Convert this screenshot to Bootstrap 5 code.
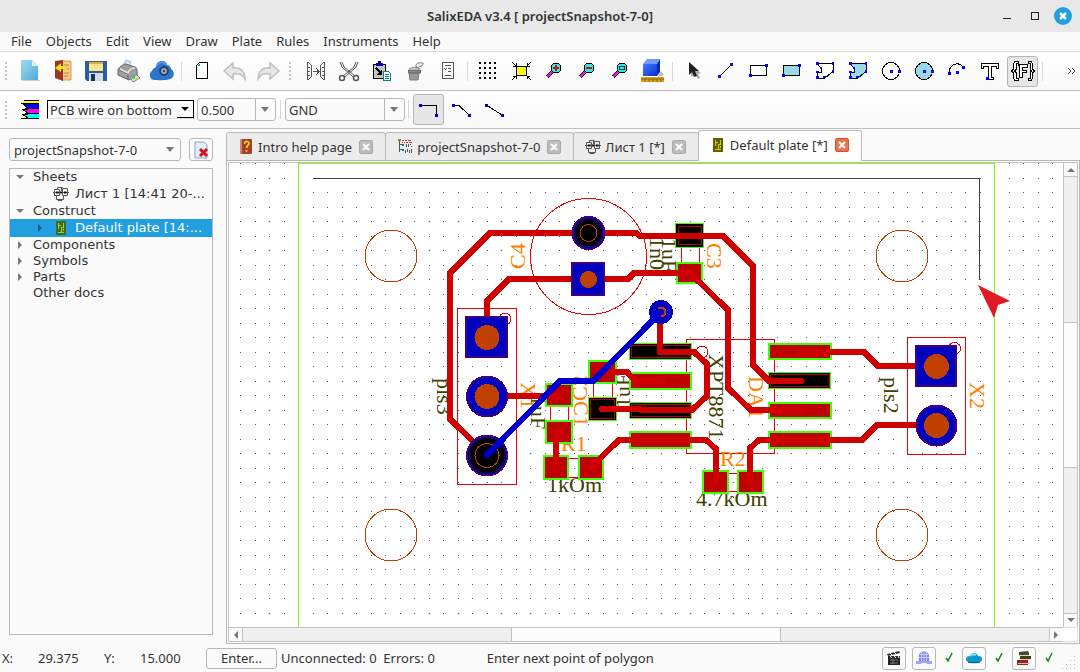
<!DOCTYPE html>
<html lang="en">
<head>
<meta charset="utf-8">
<meta name="viewport" content="width=device-width, initial-scale=1">
<title>SalixEDA v3.4</title>
<link href="https://cdn.jsdelivr.net/npm/bootstrap@5.3.0/dist/css/bootstrap.min.css" rel="stylesheet">
<style>
  body { font: 13px/16px "Noto Sans", "Liberation Sans", sans-serif; color: #333; background: #fafafa; }
  button, select { font: inherit; color: inherit; }
  .title-bar { height: 32px; background: #e8e8e8; font-weight: 600; }
  .title-text { font: 600 13px/32px "Noto Sans", sans-serif; color: #333; }
  .win-btns { padding-right: 3px; }
  .win-btn { border: 0; background: none; padding: 0; width: 28px; height: 32px; }
  .menu-bar { height: 20px; padding: 0 0 2px 11px; gap: 14px; border-bottom: 1px solid #dcdcdc; background: #fafafa; }
  .menu-bar a { color: #333; text-decoration: none; white-space: nowrap; }
  .tool-bar { border-bottom: 1px solid #bdbdbd; background: linear-gradient(#fff, #f8f8f8); }
  .bar-one { height: 39px; }
  .bar-two { height: 38px; }
  .grip { width: 13px; height: 20px; flex: none; background: radial-gradient(circle, #c4c4c4 1px, transparent 1px) 4px 0 / 4px 4px no-repeat; background-repeat: repeat-y; }
  .grip-mid { width: 15px; }
  .tool { width: 33px; height: 31px; flex: none; padding: 0; border: 0; background: none; display: flex; align-items: center; justify-content: center; }
  .tool.on { width: 31px; margin: 0 1px; background: #e6e6e6; border: 1px solid #b4b4b4; border-radius: 3px; }
  .rule { width: 1px; height: 19px; margin: 0 3px; background: #d8d8d8; flex: none; }
  .combo { appearance: none; height: 23px; padding: 0 3px; border: 1px solid #b8b8b8; border-radius: 3px; background: #fbfbfb url("data:image/svg+xml,%3Csvg xmlns='http://www.w3.org/2000/svg' width='20' height='21'%3E%3Cpath d='M.5 0v21' stroke='%23b8b8b8'/%3E%3Cpath d='M6 8h8l-4 5z' fill='%23777'/%3E%3C/svg%3E") right center no-repeat; }
  .combo-plain { padding: 0 4px; background: #fbfbfb url("data:image/svg+xml,%3Csvg xmlns='http://www.w3.org/2000/svg' width='20' height='21'%3E%3Cpath d='M6 8h8l-4 5z' fill='%23777'/%3E%3C/svg%3E") right center no-repeat; }
  .combo-layer { height: 19px; width: 147px; border: 1px solid #000; border-bottom-color: #ddd; border-radius: 0; padding: 0 2px; margin: 0 3px 0 1px; background: #fafafa url("data:image/svg+xml,%3Csvg xmlns='http://www.w3.org/2000/svg' width='16' height='17'%3E%3Cpath d='M0 16.500h16' stroke='%23000'/%3E%3Cpath d='M4 6h8l-4 4z' fill='%23000'/%3E%3C/svg%3E") right center no-repeat; }
  .side { width: 226px; flex: none; padding: 9px 13px; }
  .square-btn { width: 24px; height: 23px; padding: 0; border: 1px solid #b8b8b8; border-radius: 3px; background: #fbfbfb; display: flex; align-items: center; justify-content: center; flex: none; }
  .side { padding-left: 9px; }
  .tree { border: 1px solid #b8b8b8; margin-top: 7px; background: #fafafa; font: 13px/16px "DejaVu Sans", sans-serif; }
  .tree li { display: flex; align-items: center; height: 16px; padding-left: 5px; white-space: nowrap; }
  .tree li svg { flex: none; }
  .twist { width: 10px; height: 10px; margin-right: 8px; }
  .tree li.leaf { height: 18px; padding-left: 25px; }
  .leaf .pic { margin-right: 6px; }
  .leaf .no-twist { margin-left: 18px; }
  .tree li.picked { background: #219fde; color: #fff; }
  .tab-strip { height: 31px; margin-top: 1px; }
  .doc-tab { height: 29px; margin-left: -1px; padding: 0 12px 0 11px; background: #ececec; border: 1px solid #b8b8b8; border-radius: 3px 3px 0 0; display: flex; align-items: center; white-space: nowrap; }
  .doc-tab:first-child { margin-left: 0; }
  .doc-tab.current { height: 31px; background: #fff; border-bottom: 0; padding-bottom: 2px; position: relative; z-index: 1; }
  .doc-tab .x { border: 1px solid #a8a8a8; border-radius: 2px; background: #bdbdbd; width: 14px; height: 14px; padding: 0; display: flex; align-items: center; justify-content: center; margin-left: 7px; }
  .doc-tab.current .x { background: #e8734f; border-color: #dd4b2c; }
  .pane { border: 1px solid #b8b8b8; margin-top: -1px; padding: 1px; background: #fff; }
  .board { display: grid; grid-template: minmax(0, 1fr) 15px / minmax(0, 1fr) 15px; border: 1px solid #c2c2c2; border-width: 1px 0 0 1px; }
  .board > svg { width: 100%; height: 100%; display: block; overflow: hidden; }
  .bar-v { display: flex; flex-direction: column; border: 1px solid #c2c2c2; border-width: 0 1px; }
  .bar-h { display: flex; border: 1px solid #c2c2c2; border-width: 1px 0; }
  .arrow { flex: 0 0 13px; background: #fafafa; display: flex; align-items: center; justify-content: center; }
  .trough { flex: 1; background: #f0f0f0; }
  .slider { flex: 1; background: #fcfcfc; border: 1px solid #c2c2c2; }
  .bar-v .slider { border-width: 1px 0; } .bar-h .slider { border-width: 0 1px; }
  .bar-v .trough:nth-child(2) { border-top: 1px solid #c2c2c2; } .bar-v .trough:nth-child(4) { border-bottom: 1px solid #c2c2c2; }
  .bar-h .trough:nth-child(2) { border-left: 1px solid #c2c2c2; } .bar-h .trough:nth-child(4) { border-right: 1px solid #c2c2c2; }
  .status { height: 28px; }
  .status > * { flex: none; }
  .status-x { width: 36px; margin-left: 2px; }
  .status-y { width: 36px; }
  .status-num { width: 66px; }
  .status-icons { padding-right: 2px; }
  .gap-btn { margin-left: 6px; }
  .enter { width: 71px; height: 21px; padding: 0; border: 1px solid #b8b8b8; border-radius: 3px; background: #fbfbfb; }
  .tick { width: 26px; display: flex; justify-content: center; align-items: center; }
  .px { shape-rendering: crispEdges; }
  .cad { font: 22px "Liberation Serif", serif; }
</style>
<script src="https://cdn.jsdelivr.net/npm/bootstrap@5.3.0/dist/js/bootstrap.bundle.min.js"></script>
</head>
<body class="d-flex flex-column vh-100 overflow-hidden">

<svg width="0" height="0" class="position-absolute" aria-hidden="true">
  <defs>
    <linearGradient id="sky" x2="1" y2="1"><stop stop-color="#9fdcf0"/><stop offset="1" stop-color="#4fa9d8"/></linearGradient>
    <linearGradient id="cube" x2="1" y2="1"><stop stop-color="#3f7bff"/><stop offset="1" stop-color="#0a2fd0"/></linearGradient>
    <g id="sheet" fill="none" stroke="#555"><path d="M1.500 3.500h5v6h-5zM9.500 2.500h5v7h-5zM0 6.500h16M3.500 9v4.500h7V9M5 13.500v1h4v-1M8.500 1v4M4.500 3v-1.500h5"/><path d="M3 6.500h2.500M7 6.500h2M11 6.500h2.500" stroke="#111" stroke-width="2"/></g>
    <g id="plate"><rect x="3" y="1" width="10" height="14" fill="#3f6b1c"/><path d="M5.500 3v6M5 5.500h3M10.500 3v4M8 7.500h3M5 12.500h6M8.500 8v4M10.500 9v2" stroke="#a5cf3c" fill="none"/></g>
  </defs>
</svg>

<header class="title-bar d-flex align-items-center position-relative flex-shrink-0">
  <div class="title-text flex-grow-1 text-center">SalixEDA v3.4 [ projectSnapshot-7-0]</div>
  <div class="win-btns position-absolute end-0 top-0 d-flex">
    <button class="win-btn" aria-label="Minimize"><svg width="20" height="20" class="px"><path d="M6 12.500h8" stroke="#222"/></svg></button>
    <button class="win-btn" aria-label="Maximize"><svg width="20" height="20" class="px"><path d="M6.500 6.500h7v7h-7z" stroke="#222" fill="none"/></svg></button>
    <button class="win-btn" aria-label="Close"><svg width="20" height="20"><circle cx="10" cy="10" r="9" fill="#219fde"/><path d="M7 7l6 6M13 7l-6 6" stroke="#fff" stroke-width="2.500"/></svg></button>
  </div>
</header>

<nav class="menu-bar d-flex align-items-center flex-shrink-0">
  <a href="#">File</a><a href="#">Objects</a><a href="#">Edit</a><a href="#">View</a><a href="#">Draw</a><a href="#">Plate</a><a href="#">Rules</a><a href="#">Instruments</a><a href="#">Help</a>
</nav>

<div class="tool-bar bar-one d-flex align-items-center flex-shrink-0">
  <span class="grip"></span>
  <button class="tool" aria-label="New"><svg width="24" height="24"><path d="M3 21h19v1H5z" fill="#ccc"/><path d="M3 1h11l6 6v14H3z" fill="url(#sky)"/><path d="M14 1l6 6h-6z" fill="#d9f2fa"/></svg></button>
  <button class="tool" aria-label="Open"><svg width="24" height="24"><path d="M10 2h10v19H10z" fill="#f3c98a" stroke="#d99a4a"/><path d="M13 6h5M13 10h5M13 14h5M13 17h4" stroke="#c7823a"/><path d="M4 2l8-1v21l-8-3z" fill="#9c3526"/><path d="M4 9l6-5v3c5 0 6 2 6 5-2-2-3-2-6-2v3z" fill="#ffe11a"/></svg></button>
  <button class="tool" aria-label="Save"><svg width="24" height="24"><path d="M1 2h22v20H3l-2-2z" fill="#2a5f9e"/><path d="M5 3h14v9H5z" fill="#ffe38a"/><path d="M5 3h14v2H5z" fill="#e7a648"/><path d="M5 14h14v8H5z" fill="#d7dde3"/><path d="M7 15h4v7H7z" fill="#17355e"/></svg></button>
  <button class="tool" aria-label="Print"><svg width="24" height="24"><path d="M6 7l3-6 5 2-3 6z" fill="#d8ecff" stroke="#8fb6dc"/><path d="M1 11c0-2 5-6 8-6l9 3c2 1 2 2 2 4v5l-8 4-11-5z" fill="#9f9f9f" stroke="#666"/><path d="M2 11l9 4v6" stroke="#666" fill="none"/><path d="M3 10l8 4c1-3 3-5 7-5" stroke="#e4e4e4" fill="none" stroke-width="1.500"/><path d="M13 18l7-2 3 3-7 4z" fill="#c8e8ff" stroke="#789"/><path d="M15 19l3-1" stroke="#2c2" stroke-width="2"/><path d="M18 21l3-2" stroke="#fb3" stroke-width="2"/></svg></button>
  <button class="tool" aria-label="Cloud"><svg width="26" height="24"><path d="M5 21a5 5 0 01-2-9c1-3 3-3 4-4 0-4 3-6 6-6s5 2 5 4c3 0 4 3 4 4 3 2 4 6 1 9-3 3-15 2-18 2z" fill="#2b74cf"/><path d="M7 8c2-5 8-6 10-2" stroke="#7ab4f0" fill="none"/><circle cx="15" cy="12" r="4" fill="#8fa9c4" stroke="#28405c" stroke-width="2"/><circle cx="15" cy="12" r="1" fill="#123"/></svg></button>
  <span class="rule"></span>
  <button class="tool" aria-label="New sheet"><svg width="24" height="24" class="px"><path d="M9.500 3.500h8v16h-11v-13z" fill="#fff" stroke="#000"/><path d="M7 7h3V4z" fill="#088"/></svg></button>
  <button class="tool" aria-label="Undo"><svg width="24" height="24"><path d="M1 11l9-8v5c8-1 12 4 12 11-3-5-6-6-12-5v5z" transform="translate(0 1)" fill="#e6e6e6" stroke="#c0c0c0" stroke-width="1.500"/></svg></button>
  <button class="tool" aria-label="Redo"><svg width="24" height="24"><path d="M23 11l-9-8v5C6 7 2 12 2 19c3-5 6-6 12-5v5z" transform="translate(0 1)" fill="#e6e6e6" stroke="#c0c0c0" stroke-width="1.500"/></svg></button>
  <span class="grip grip-mid"></span>
  <button class="tool" aria-label="Mirror"><svg width="24" height="24" class="px" fill="none" stroke="#555"><path d="M3.500 3v18M7.500 6v12M4 3.500h1M5 4.500h1M6 5.500h1M4 20.500h1M5 19.500h1M6 18.500h1M20.500 3v18M16.500 6v12M19 3.500h1M18 4.500h1M17 5.500h1M19 20.500h1M18 19.500h1M17 18.500h1M9 12.500h6M12 9l3 3.500-3 3.500M4 8h2M4 12h2M4 16h2M18 8h2M18 12h2M18 16h2"/></svg></button>
  <button class="tool" aria-label="Cut"><svg width="24" height="24" fill="none" stroke="#555"><path d="M3 3l2 5 11 10M5 3l2 5 11 9M21 3l-2 5L8 18M19 3l-2 5L6 17"/><circle cx="5" cy="19" r="2.500" stroke-width="1.500"/><circle cx="19" cy="19" r="2.500" stroke-width="1.500"/></svg></button>
  <button class="tool" aria-label="Paste"><svg width="24" height="24" class="px"><path d="M3.500 5.500h12v14h-12z" fill="#c4c4c4" stroke="#000"/><path d="M6 4h7v3H6z" fill="#00a"/><path d="M8 2h3v3H8z" fill="#008"/><path d="M6 9l5 5" stroke="#000" stroke-width="2"/><path d="M12 10v6H7z"/><path d="M13.500 12.500h5l2 2v7h-7z" fill="#fff" stroke="#088"/><path d="M15 15.500h4M15 17.500h4M15 19.500h4" stroke="#088"/></svg></button>
  <button class="tool" aria-label="Delete"><svg width="24" height="24"><path d="M6 14h10l-1 7H7z" fill="#999" stroke="#777"/><path d="M5.500 11h12v3h-12z" fill="#888" stroke="#666"/><path d="M6 10c2-2 9-2 11 0" fill="#ccc" stroke="#888"/><path d="M13 8c-1-3 3-5 5-4 3-1 3 2 0 3s-2 2-5 1" fill="#eee" stroke="#777"/></svg></button>
  <button class="tool" aria-label="Properties"><svg width="24" height="24" class="px" fill="none" stroke="#555"><path d="M6.500 3.500h11v16h-11zM9 6.500h6M12 9.500h3M12 12.500h3M9 16.500h6M8 9.500h1M9 10.500h1M10 9.500h1"/></svg></button>
  <span class="rule"></span>
  <button class="tool" aria-label="Grid"><svg width="24" height="24" class="px"><g stroke="#000" stroke-width="2" stroke-dasharray="2 3"><path d="M3 4h17M3 9h17M3 14h17M3 19h17"/></g></svg></button>
  <button class="tool" aria-label="Fit"><svg width="24" height="24" class="px"><path d="M7.500 7.500h10v9h-10z" fill="#ff0" stroke="#000"/><path d="M3 3l4 4M7 4v3H4M22 3l-4 4M18 4v3h3M3 21l4-4M7 20v-3H4M22 21l-4-4M18 20v-3h3" stroke="#000" fill="none"/></svg></button>
  <button class="tool" aria-label="Zoom in"><svg width="24" height="24" class="px"><path d="M5 18l6-6" stroke="#000" stroke-width="4"/><path d="M5 18l6-6" stroke="#f0f" stroke-width="2"/><circle cx="14" cy="9" r="5" fill="#2ee" stroke="#000"/><path d="M11 9h6M14 6v6" stroke="#e00" stroke-width="2"/></svg></button>
  <button class="tool" aria-label="Zoom out"><svg width="24" height="24" class="px"><path d="M5 18l6-6" stroke="#000" stroke-width="4"/><path d="M5 18l6-6" stroke="#f0f" stroke-width="2"/><circle cx="14" cy="9" r="5" fill="#2ee" stroke="#000"/><path d="M11 9h6" stroke="#e00" stroke-width="2"/></svg></button>
  <button class="tool" aria-label="Zoom area"><svg width="24" height="24" class="px"><path d="M5 18l6-6" stroke="#000" stroke-width="4"/><path d="M5 18l6-6" stroke="#f0f" stroke-width="2"/><circle cx="14" cy="9" r="5" fill="#2ee" stroke="#000"/><path d="M11.500 7.500h5v3h-5z" stroke="#033" fill="none"/></svg></button>
  <button class="tool" aria-label="3D view"><svg width="26" height="26"><path d="M18 19l6-2-3-4z" fill="#bbb"/><path d="M3 6l4-5h13l-3 5z" fill="#6f9cff"/><path d="M17 6l3-5v13l-3 4z" fill="#0a28a8"/><path d="M3 6h14v12H3z" fill="url(#cube)"/><path d="M1 19h23v5H1z" fill="#d9a21b"/><path d="M1 21h23M5 21v3M9 21v3M13 21v3M17 21v3M21 21v3" stroke="#8c640a"/></svg></button>
  <span class="rule"></span>
  <button class="tool" aria-label="Select"><svg width="24" height="24"><path d="M10 6v12l4-3 3 5 2-1-2-4 3-1z" fill="#aaa"/><path d="M8 3v13l3-3 2 5 3-1-2-5h4z" fill="#222"/></svg></button>
  <button class="tool" aria-label="Line"><svg width="24" height="24" class="px"><path d="M6 17L18 5" stroke="#000"/><path d="M4 16h3v3H4zM16 4h3v3h-3z" fill="#00f"/><path d="M5 17h1v1H5zM17 5h1v1h-1z" fill="#c06"/></svg></button>
  <button class="tool" aria-label="Rectangle"><svg width="24" height="24" class="px"><path d="M3.500 6.500h16v10h-16z" fill="#fff" stroke="#000"/><path d="M2 15h3v3H2zM18 5h3v3h-3z" fill="#00f"/></svg></button>
  <button class="tool" aria-label="Filled rectangle"><svg width="24" height="24" class="px"><path d="M3.500 6.500h16v10h-16z" fill="#9ad9ea" stroke="#000"/><path d="M2 15h3v3H2zM18 5h3v3h-3z" fill="#00f"/></svg></button>
  <button class="tool" aria-label="Polygon"><svg width="24" height="24" class="px"><path d="M4 4.500h16v8l-8 6.500H4v-6h4v-4z" fill="#fff" stroke="#000"/><path d="M3 3h3v3H3zM19 3h2v3h-2zM19 11h2v3h-2zM10 17h3v2h-3zM3 17h3v3H3zM3 12h3v2H3zM7 8h2v2H7z" fill="#00f"/></svg></button>
  <button class="tool" aria-label="Filled polygon"><svg width="24" height="24" class="px"><path d="M4 4.500h16v8l-8 6.500H4v-6h4v-4z" fill="#9ad9ea" stroke="#000"/><path d="M3 3h3v3H3zM19 3h2v3h-2zM19 11h2v3h-2zM10 17h3v2h-3zM3 17h3v3H3zM3 12h3v2H3zM7 8h2v2H7z" fill="#00f"/></svg></button>
  <button class="tool" aria-label="Circle"><svg width="24" height="24" class="px"><circle cx="12" cy="12" r="8.500" fill="#fff" stroke="#000"/><path d="M11 11h3v3h-3zM19 11h3v3h-3z" fill="#00f"/><path d="M12 12h1v1h-1zM20 12h1v1h-1z" fill="#c06"/></svg></button>
  <button class="tool" aria-label="Filled circle"><svg width="24" height="24" class="px"><circle cx="12" cy="12" r="8.500" fill="#9ad9ea" stroke="#000"/><path d="M11 11h3v3h-3zM19 11h3v3h-3z" fill="#00f"/><path d="M12 12h1v1h-1zM20 12h1v1h-1z" fill="#c06"/></svg></button>
  <button class="tool" aria-label="Arc"><svg width="24" height="24" class="px"><path d="M4 13C5 5 14 2 18 8" fill="none" stroke="#000"/><path d="M3 13h3v3H3zM17 7h3v3h-3zM11 12h3v3h-3z" fill="#00f"/></svg></button>
  <button class="tool" aria-label="Text"><svg width="24" height="24" class="px"><path d="M3.500 4.500h17v5h-2v-2h-5v11h2v2h-7v-2h2v-11h-5v2h-2z" fill="#fff" stroke="#000"/><path d="M8 18h3v3H8z" fill="#00f"/></svg></button>
  <button class="tool on" aria-label="Function text" aria-pressed="true"><svg width="26" height="24" class="px" fill="#fff" stroke="#000"><path d="M8 2.500H5L3.500 5v5L1.500 12l2 2v5L5 21.500h3v-2H6v-6L4.500 12 6 10.500V4.500h2zM18 2.500h3L22.500 5v5l2 2-2 2v5L21 21.500h-3v-2h2v-6l1.500-1.500L20 10.500V4.500h-2z"/><path d="M8.500 5.500h9v3h-5v3h4v2h-4v5h-3v-11z"/></svg></button>
  <span class="rule"></span>
  <button class="tool ms-auto justify-content-end pe-1" aria-label="More"><svg width="9" height="8" fill="none" stroke="#555"><path d="M1 1l3 3-3 3M5 1l3 3-3 3"/></svg></button>
</div>

<div class="tool-bar bar-two d-flex align-items-center flex-shrink-0">
  <span class="grip"></span>
  <button class="tool" aria-label="Layers"><svg width="18" height="19" class="px"><path d="M3 1h15v2H1z" fill="#ff0"/><path d="M1 4h17v4H6z" fill="#00f"/><path d="M1 9h17v4H6z" fill="#f0f"/><path d="M1 14h17v4H6z" fill="#0ff"/><path d="M3 .5h15M0 3.500h18M4 8.500h14M4 13.500h14M0 18.500h18M1 9.500h6M1 14.500h6M1 3l6 5M1 9l6 4M1 14l6 4" stroke="#000" fill="none"/></svg></button>
  <select class="combo combo-layer" aria-label="Layer"><option>PCB wire on bottom</option></select>
  <select class="combo" aria-label="Wire width" style="width: 79px"><option>0.500</option></select>
  <span class="rule mx-1"></span>
  <select class="combo" aria-label="Net" style="width: 120px"><option>GND</option></select>
  <span class="rule"></span>
  <button class="tool on" aria-label="Orthogonal" aria-pressed="true"><svg width="24" height="24" class="px"><path d="M4 7.500h15.500V17" fill="none" stroke="#000"/><path d="M2 6h3v3H2zM18 16h3v3h-3z" fill="#00c"/></svg></button>
  <button class="tool" aria-label="Diagonal bend"><svg width="24" height="24" class="px"><path d="M4 7.500h5L19 17" fill="none" stroke="#000"/><path d="M2 6h3v3H2zM18 16h3v3h-3z" fill="#00c"/></svg></button>
  <button class="tool" aria-label="Straight"><svg width="24" height="24" class="px"><path d="M4 7.500L19 17" fill="none" stroke="#000"/><path d="M2 6h3v3H2zM18 16h3v3h-3z" fill="#00c"/></svg></button>
</div>

<main class="d-flex flex-grow-1" style="min-height: 0">
  <aside class="side d-flex flex-column">
    <div class="d-flex justify-content-between">
      <select class="combo combo-plain flex-grow-1 me-2" aria-label="Project"><option>projectSnapshot-7-0</option></select>
      <button class="square-btn" aria-label="Close project"><svg width="18" height="18"><path d="M3 1h9l3 3v13H3z" fill="#e4eefb" stroke="#8aa3c4"/><path d="M8 8l7 7M15 8l-7 7" stroke="#d8121d" stroke-width="3"/></svg></button>
    </div>
    <ul class="tree list-unstyled flex-grow-1 mb-0">
      <li><svg class="twist" viewBox="0 0 10 10"><path d="M1 3h8L5 7z" fill="#777"/></svg>Sheets</li>
      <li class="leaf"><svg class="pic no-twist" width="16" height="16"><use href="#sheet"/></svg>Лист 1 [14:41 20-...</li>
      <li><svg class="twist" viewBox="0 0 10 10"><path d="M1 3h8L5 7z" fill="#777"/></svg>Construct</li>
      <li class="leaf picked"><svg class="twist" viewBox="0 0 10 10"><path d="M3 1v8l4-4z" fill="#0c5f8c"/></svg><svg class="pic" width="16" height="16"><use href="#plate"/></svg>Default plate [14:...</li>
      <li><svg class="twist" viewBox="0 0 10 10"><path d="M3 1v8l4-4z" fill="#777"/></svg>Components</li>
      <li><svg class="twist" viewBox="0 0 10 10"><path d="M3 1v8l4-4z" fill="#777"/></svg>Symbols</li>
      <li><svg class="twist" viewBox="0 0 10 10"><path d="M3 1v8l4-4z" fill="#777"/></svg>Parts</li>
      <li><span class="twist"></span>Other docs</li>
    </ul>
  </aside>

  <section class="d-flex flex-column flex-grow-1" style="min-width: 0">
    <div class="tab-strip d-flex align-items-end flex-shrink-0">
      <div class="doc-tab"><svg width="16" height="16" class="me-1"><rect x="2" y="0" width="12" height="15" rx="1" fill="#a5402a"/><rect x="2" width="2" height="15" fill="#c98a7a"/><path d="M6.500 5c0-4 5-3 4.500 0-1 1.500-2 1.500-2.500 4M7.500 12h2" stroke="#ffe000" stroke-width="1.500" fill="none"/></svg>Intro help page<button class="x" aria-label="Close tab"><svg width="8" height="8"><path d="M1 1l6 6M7 1L1 7" stroke="#fff" stroke-width="2"/></svg></button></div>
      <div class="doc-tab"><svg width="16" height="16" class="me-1 px"><path d="M2.500 1v12M2 5.500h4M2 10.500h4" stroke="#555"/><path d="M1 0h3v2H1z" fill="#880"/><path d="M5 5h2v2H5zM5 10h2v2H5z" fill="#088"/><path d="M5 1.500h2M8 1.500h2M11 1.500h3M5 3.500h1M7 3.500h1M9 3.500h2M12 3.500h3" stroke="#b33"/><path d="M9 5h1v3H9zM11 5h1v3h-1zM13 5h1v1h-1zM14 7h1v1h-1zM8 11h1v3H8zM10 10h1v3h-1zM12 11h1v3h-1zM14 10h1v4h-1z" fill="#555"/></svg>projectSnapshot-7-0<button class="x" aria-label="Close tab"><svg width="8" height="8"><path d="M1 1l6 6M7 1L1 7" stroke="#fff" stroke-width="2"/></svg></button></div>
      <div class="doc-tab"><svg width="16" height="16" class="me-1"><use href="#sheet"/></svg>Лист 1 [*]<button class="x" aria-label="Close tab"><svg width="8" height="8"><path d="M1 1l6 6M7 1L1 7" stroke="#fff" stroke-width="2"/></svg></button></div>
      <div class="doc-tab current"><svg width="16" height="16" class="me-1"><path d="M3 1h10v14H3z" fill="#665c00"/><path d="M5.500 3v6M5 5.500h3M10.500 3v4M8 7.500h3M5 12.500h6M8.500 8v4M10.500 9v2" stroke="#d4c81a" fill="none"/></svg>Default plate [*]<button class="x" aria-label="Close tab"><svg width="8" height="8"><path d="M1 1l6 6M7 1L1 7" stroke="#fff" stroke-width="2"/></svg></button></div>
    </div>
    <div class="pane d-flex flex-grow-1" style="min-height: 0">
      <div class="board flex-grow-1">
        <svg role="img" aria-label="Printed circuit board">
          <g transform="translate(-229 -163)">
            <defs><pattern id="dots" x="240" y="178" width="29" height="29" patternUnits="userSpaceOnUse"><path d="M0 0h1v1H0zM15 0h1v1h-1zM0 14h1v1H0zM15 14h1v1h-1z" fill="#555"/></pattern></defs>
            <rect x="229" y="163" width="3000" height="2000" fill="#fff"/>
            <rect x="229" y="163" width="3000" height="2000" fill="url(#dots)" class="px"/>
            <g class="px" fill="none">
              <path d="M298.500 900V163.500H994.500V900" stroke="#80ff00"/>
              <path d="M313 178.500H979.500V280" stroke="#404040"/>
              <g stroke="#bf4000"><circle cx="391" cy="256" r="26"/><circle cx="391" cy="535" r="26"/><circle cx="902" cy="256" r="26"/><circle cx="902" cy="535" r="26"/></g>
              <g stroke="#f00000">
                <circle cx="588.500" cy="256.500" r="58"/>
                <path d="M457.500 308.500h59v176h-59zM907.500 337.500h58v117h-58zM686.500 339.500h88v114h-88zM681.500 247v15M699.500 247v15M550.500 406v14M568.500 406v14M593.500 383v15M612.500 383v15M569 458.500h9M569 477.500h9M729 473.500h8M729 491.500h8"/>
                <circle cx="505" cy="319" r="6"/><circle cx="954.500" cy="348.500" r="6"/><circle cx="702" cy="352" r="6"/>
              </g>
            </g>
            <g class="cad" fill="#404000">
              <text transform="translate(437 378) rotate(90)">pls3</text>
              <text transform="translate(884 377) rotate(90)">pls2</text>
              <text transform="translate(709 354) rotate(90)">XPT8871</text>
              <text transform="translate(531 395) rotate(90)">1uF</text>
              <text transform="translate(662 238) rotate(90)">1uF</text>
              <text transform="translate(650 237) rotate(90)">1n0</text>
              <text transform="translate(630 408) rotate(-90)">1uF</text>
              <text x="547" y="492">1kOm</text>
              <text x="696" y="506">4.7kOm</text>
            </g>
            <g class="cad" fill="#ff8000">
              <text transform="translate(525 269) rotate(-90)">C4</text>
              <text transform="translate(707 243) rotate(90)">C3</text>
              <text transform="translate(970 382) rotate(90)">X2</text>
              <text transform="translate(521 382) rotate(90)">X1</text>
              <text transform="translate(749 376) rotate(90)">DA1</text>
              <text transform="translate(587 401) rotate(-90)">C2</text>
              <text transform="translate(574 401) rotate(90)">C1</text>
              <text x="561" y="451">R1</text>
              <text x="720" y="466">R2</text>
            </g>
            <g class="px">
              <g fill="#bf0000" stroke="#40ff00" stroke-width="2">
                <path d="M677 263h25v20h-25zM546 384h26v22h-26zM546 421h26v22h-26zM589 361h27v22h-27zM544 456h24v23h-24zM579 456h24v23h-24zM703 471h25v22h-25zM738 471h25v22h-25z"/>
                <path d="M630 373h61v16h-61zM630 432h61v16h-61zM769 344h62v15h-62zM769 403h62v15h-62zM769 432h62v16h-62z"/>
              </g>
              <path d="M675.500 223.500h28v24h-28zM588.500 397.500h28v23h-28zM629.500 343.500h62v16h-62zM629.500 402.500h62v16h-62zM768.500 372.500h62v16h-62z" fill="#000" stroke="#40ff00"/>
              <path d="M678.500 226.500h23v18h-23zM590.500 399.500h24v19h-24zM631.500 345.500h59v12h-59zM631.500 404.500h59v12h-59zM770.500 374.500h59v12h-59z" fill="none" stroke="#bf0000"/>
            </g>
            <g fill="none" stroke="#ce0000" stroke-width="6" stroke-linejoin="round" stroke-linecap="round" class="px">
              <path d="M487 455L450 419V273L490 233H636L640 236H723L753 266V365L769 381H801"/>
              <path d="M487 337V301L509 279H628L634 273H690L728 310V388L751 410H802"/>
              <path d="M660 312V352H694L707 364V396L692 410H641L640 409H602M487 396H560M559 432L556 441V467M591 467L619 440H706L716 449V482M750 482V448L759 440H862L877 425H936M801 352H864L878 366H936M602 372H627L635 381H663"/>
            </g>
            <g class="px" stroke-width="2">
              <path d="M466 317h41v40h-41zM572 263h32v32h-32zM916 346h40v40h-40z" fill="#0000bf" stroke="#400080"/>
              <g fill="#0000bf" stroke="#400080"><circle cx="487" cy="396.500" r="20"/><circle cx="936.500" cy="425.500" r="20"/></g>
              <g fill="#000" stroke="#400080"><circle cx="487" cy="455.500" r="20"/><circle cx="588.500" cy="233" r="16"/></g>
              <g fill="none" stroke="#0000bf" stroke-width="1"><circle cx="487" cy="455.500" r="18"/><circle cx="588.500" cy="233" r="14"/></g>
              <g fill="none" stroke="#bf4000" stroke-width="1"><circle cx="487" cy="455.500" r="12"/><circle cx="588.500" cy="233" r="8.500"/></g>
              <g fill="#bf4000" stroke="none"><circle cx="487" cy="337.500" r="12.500"/><circle cx="487" cy="396.500" r="12.500"/><circle cx="588.500" cy="279.500" r="8.500"/><circle cx="936.500" cy="366.500" r="12.500"/><circle cx="936.500" cy="425.500" r="12.500"/></g>
              <circle cx="661" cy="312" r="12" fill="#0000bf"/>
              <path d="M661 312L593 381H560L487 455" fill="none" stroke="#0000ce" stroke-width="6" stroke-linecap="round"/>
              <path d="M658 308.500a4.500 4.500 0 113 8" fill="none" stroke="#bf4000"/>
            </g>
            <path d="M978 285L1010 301L998 305L994 318z" fill="#e01b24"/>
          </g>
        </svg>
        <div class="bar-v">
          <span class="arrow"><svg width="8" height="5"><path d="M0 5h8L4 1z" fill="#777"/></svg></span><span class="trough"></span><span class="slider"></span><span class="trough"></span><span class="arrow"><svg width="8" height="5"><path d="M0 0h8L4 4z" fill="#777"/></svg></span>
        </div>
        <div class="bar-h">
          <span class="arrow"><svg width="5" height="8"><path d="M5 0v8L1 4z" fill="#777"/></svg></span><span class="trough"></span><span class="slider"></span><span class="trough"></span><span class="arrow"><svg width="5" height="8"><path d="M0 0v8l4-4z" fill="#777"/></svg></span>
        </div>
        <div class="border border-start-0"></div>
      </div>
    </div>
  </section>
</main>

<footer class="status d-flex align-items-center flex-shrink-0">
  <span class="status-x">X:</span><span class="status-num">29.375</span><span class="status-y">Y:</span><span class="status-num">15.000</span>
  <button class="enter me-1">Enter...</button>
  <span>Unconnected: 0&nbsp; Errors: 0</span>
  <span class="ms-5 ps-1">Enter next point of polygon</span>
  <div class="status-icons ms-auto d-flex">
    <button class="square-btn" aria-label="Movie"><svg width="16" height="16"><path d="M2 6h12v9H2z" fill="#222"/><path d="M1 4l12-3 1 2L2 6z" fill="#333"/><path d="M4 3l2 2M8 2l2 2M4 6l2 2M8 6l2 2M12 6l1 2" stroke="#fff"/><path d="M4 10h8M4 13h8M7 9v5" stroke="#777"/></svg></button>
    <button class="square-btn gap-btn" aria-label="Server"><svg width="18" height="16"><path d="M4 11V6c0-6 10-6 10 0v5z" fill="#7b83f2"/><path d="M4 7.500h10M5 4.500h8M9 1v10M6.500 2v9M11.500 2v9" stroke="#c9ccff"/><path d="M1 11h16v3h-5l-1-1H7l-1 1H1z" fill="#a0a5fa"/></svg></button>
    <span class="tick"><svg width="10" height="12"><path d="M2 6l2 3 4-8" fill="none" stroke="#108a10" stroke-width="1.500"/></svg></span>
    <button class="square-btn" aria-label="Cloud"><svg width="18" height="16"><path d="M1 9c0-2 2-3 4-3 1-4 7-4 8 0 3 0 4 1 4 3 0 3-3 4-8 4s-8-1-8-4z" fill="#0a9ac9"/><path d="M5 6c2-2 4-2 6-1" stroke="#7de3ff" fill="none" stroke-width="2"/><path d="M3 12c4 1 9 1 12 0" stroke="#064f7a" fill="none"/></svg></button>
    <span class="tick"><svg width="10" height="12"><path d="M2 6l2 3 4-8" fill="none" stroke="#108a10" stroke-width="1.500"/></svg></span>
    <button class="square-btn" aria-label="Library"><svg width="16" height="16"><path d="M3 2l9-1 1 2v2H3z" fill="#3c4a35"/><path d="M3 5.500h10" stroke="#e8d9a8"/><path d="M4 6h11v3H4z" fill="#4b3a20"/><path d="M5 9.500h10" stroke="#f0c9a0"/><path d="M1 10h11v5H1z" fill="#8c2b22"/><path d="M2 13.500h12" stroke="#e8b9a0"/></svg></button>
    <span class="tick"><svg width="10" height="12"><path d="M2 6l2 3 4-8" fill="none" stroke="#108a10" stroke-width="1.500"/></svg></span>
    <svg width="16" height="16" class="align-self-end px" fill="#c4c4c4"><path d="M12 2h1v1h-1zM8 6h1v1H8zM12 6h1v1h-1zM4 10h1v1H4zM8 10h1v1H8zM12 10h1v1h-1zM0 14h1v1H0zM4 14h1v1H4zM8 14h1v1H8zM12 14h1v1h-1z"/></svg>
  </div>
</footer>
</body>
</html>
